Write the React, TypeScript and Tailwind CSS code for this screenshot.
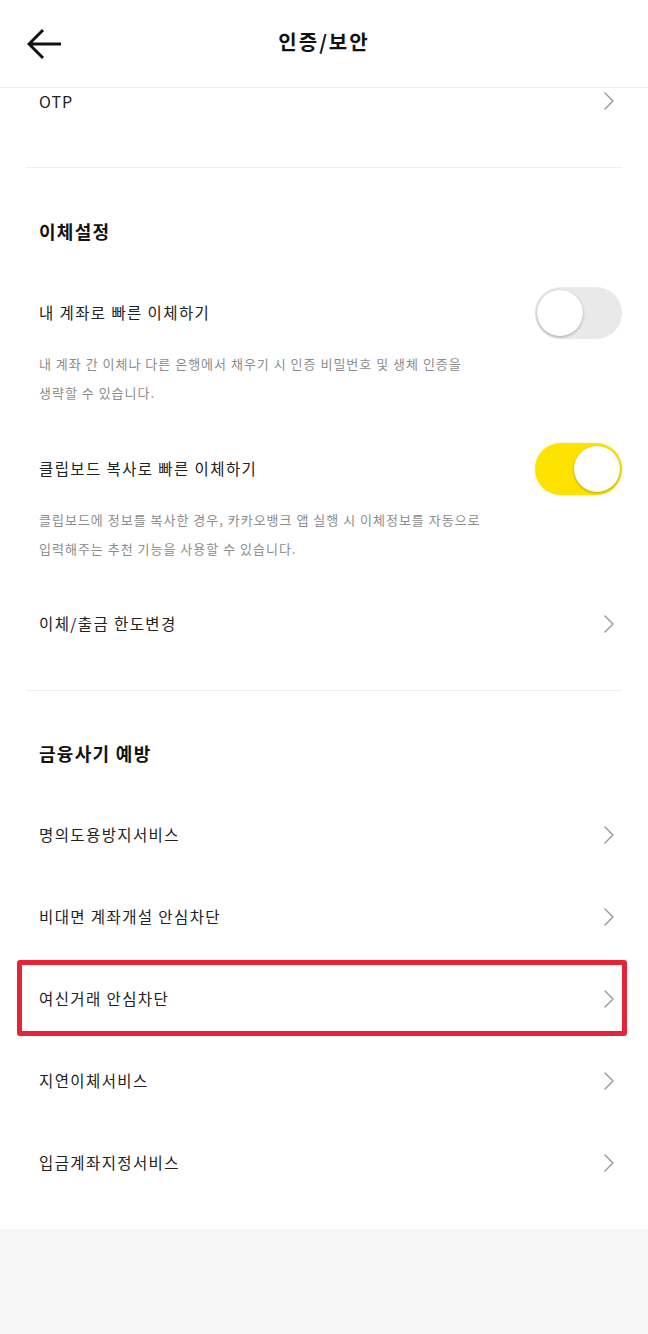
import React from "react";

const Chevron = () => (
  <svg width="12" height="20" viewBox="0 0 12 20" fill="none">
    <path d="M2 2 L10 10 L2 18" stroke="#a0a0a0" strokeWidth="1.6" strokeLinecap="round" strokeLinejoin="round" />
  </svg>
);

const Toggle = ({ on }: { on: boolean }) => (
  <div
    className={
      on
        ? "w-[87px] h-[52px] rounded-full bg-[#ffe300] flex items-center justify-end px-[2px] shadow-[0_0_2px_#f5e67a]"
        : "w-[87px] h-[52px] rounded-full bg-[#e9e9e9] flex items-center justify-start px-[2px]"
    }
  >
    <div className="w-[46px] h-[46px] rounded-full bg-white shadow-[0_1px_3px_rgba(0,0,0,0.3)]" />
  </div>
);

const NavRow = ({ label, boxed }: { label: string; boxed?: boolean }) => (
  <div className="relative h-[82px] flex items-center justify-between pl-[13px] pr-[7px]">
    <span className="text-[15.5px] tracking-[1.4px] text-[#222]">{label}</span>
    <Chevron />
    {boxed && (
      <div className="absolute left-[-9px] right-[-5px] top-[2px] bottom-[4px] border-[5px] border-[#e52535] rounded-[3px] pointer-events-none" />
    )}
  </div>
);

export default function App() {
  return (
    <div
      className="w-[648px] min-h-[1334px] bg-[#f6f6f6]"
      style={{ fontFamily: '"Noto Sans CJK KR", "Noto Sans", sans-serif' }}
    >
      <div className="bg-white">
        <header className="relative h-[88px] flex items-center justify-center border-b border-[#eeeeee]">
          <div className="absolute left-[27px] top-[28px]">
            <svg width="36" height="32" viewBox="0 0 36 32" fill="none">
              <path d="M2 16 H34 M16 2 L2 16 L16 30" stroke="#111" strokeWidth="3" strokeLinejoin="miter" />
            </svg>
          </div>
          <h1 className="text-[20px] font-bold tracking-[2px] text-[#111] -mt-[4px]">인증/보안</h1>
        </header>

        <div className="mx-[26px]">
          {/* OTP */}
          <div className="h-[26px] flex items-center justify-between pl-[13px] pr-[7px]">
            <span className="text-[16px] tracking-[1px] text-[#222]">OTP</span>
            <Chevron />
          </div>
          <div className="h-[53px]" />
          <div className="h-px bg-[#eeeeee]" />

          {/* 이체설정 */}
          <div className="mt-[43px] h-[40px] flex items-center pl-[13px]">
            <span className="text-[18px] font-bold tracking-[1.3px] text-[#111]">이체설정</span>
          </div>

          <div className="mt-[36px] h-[52px] flex items-center justify-between pl-[13px]">
            <span className="text-[15.5px] tracking-[1.4px] text-[#222]">내 계좌로 빠른 이체하기</span>
            <Toggle on={false} />
          </div>
          <p className="mt-[10px] pl-[13px] text-[13px] tracking-[1px] leading-[29px] text-[#8c8c8c]">
            내 계좌 간 이체나 다른 은행에서 채우기 시 인증 비밀번호 및 생체 인증을
            <br />
            생략할 수 있습니다.
          </p>

          <div className="mt-[36px] h-[52px] flex items-center justify-between pl-[13px]">
            <span className="text-[15.5px] tracking-[1.4px] text-[#222]">클립보드 복사로 빠른 이체하기</span>
            <Toggle on={true} />
          </div>
          <p className="mt-[10px] pl-[13px] text-[13px] tracking-[1px] leading-[29px] text-[#8c8c8c]">
            클립보드에 정보를 복사한 경우, 카카오뱅크 앱 실행 시 이체정보를 자동으로
            <br />
            입력해주는 추천 기능을 사용할 수 있습니다.
          </p>

          <div className="mt-[48px] h-[26px] flex items-center justify-between pl-[13px] pr-[7px]">
            <span className="text-[15.5px] tracking-[1.4px] text-[#222]">이체/출금 한도변경</span>
            <Chevron />
          </div>
          <div className="h-[53px]" />
          <div className="h-px bg-[#eeeeee]" />

          {/* 금융사기 예방 */}
          <div className="mt-[42px] h-[40px] flex items-center pl-[13px]">
            <span className="text-[18px] font-bold tracking-[1.3px] text-[#111]">금융사기 예방</span>
          </div>

          <div className="mt-[21px] pb-[25px]">
            <NavRow label="명의도용방지서비스" />
            <NavRow label="비대면 계좌개설 안심차단" />
            <NavRow label="여신거래 안심차단" boxed />
            <NavRow label="지연이체서비스" />
            <NavRow label="입금계좌지정서비스" />
          </div>
        </div>
      </div>
    </div>
  );
}
